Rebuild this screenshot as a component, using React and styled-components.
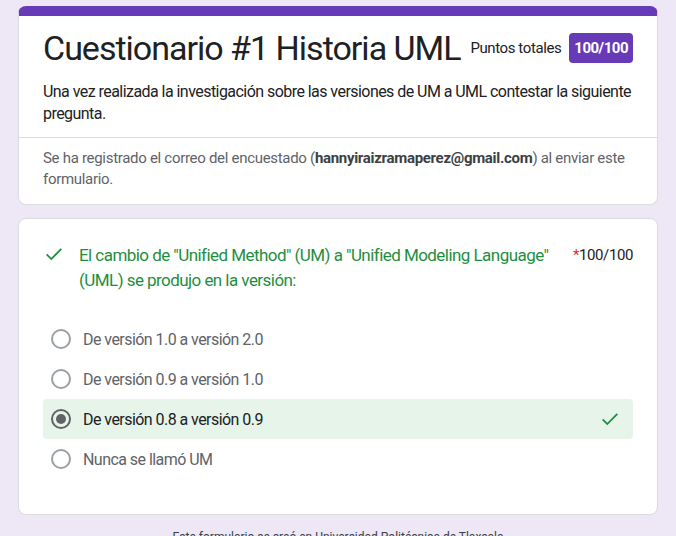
import React from 'react'
import styled, { createGlobalStyle } from 'styled-components'

const GlobalStyle = createGlobalStyle`
  body {
    margin: 0;
    background: #ede7f6;
    font-family: Roboto, "Liberation Sans", Arial, sans-serif;
  }
`

const Page = styled.div`
  width: 640px;
  padding: 6px 18px 0;
  display: flex;
  flex-direction: column;
  gap: 13px;
`

const Card = styled.section`
  background: #fff;
  border: 1px solid #dadce0;
  border-radius: 8px;
  overflow: hidden;
`

const HeaderCard = styled(Card)`
  border-top: 10px solid #673ab7;
  border-color: #673ab7 #dadce0 #dadce0;
`

const HeaderTop = styled.div`
  padding: 12px 24px 12px;
`

const TitleRow = styled.div`
  display: flex;
  align-items: center;
  gap: 8px;
  height: 40px;
`

const Title = styled.h1`
  margin: 0;
  font-size: 34px;
  font-weight: 400;
  color: #202124;
  letter-spacing: -1px;
  flex: 1;
  white-space: nowrap;
`

const PointsLabel = styled.span`
  font-size: 15px;
  color: #202124;
  letter-spacing: -0.4px;
`

const Badge = styled.span`
  background: #673ab7;
  color: #fff;
  font-size: 15px;
  font-weight: 700;
  border-radius: 4px;
  padding: 6px 5px;
  letter-spacing: -0.5px;
`

const Description = styled.p`
  margin: 13px 0 0;
  font-size: 16px;
  line-height: 22px;
  color: #202124;
  letter-spacing: -0.55px;
`

const Notice = styled.div`
  border-top: 1px solid #dadce0;
  padding: 10px 24px 14px;
  font-size: 15px;
  line-height: 21px;
  color: #5f6368;
  letter-spacing: -0.3px;

  b {
    color: #3c4043;
  }
`

const QuestionCard = styled(Card)`
  padding: 24px 24px 35px;
`

const QuestionRow = styled.div`
  display: flex;
  align-items: flex-start;
`

const QuestionIcon = styled.span`
  display: flex;
  margin-right: 14px;
`

const QuestionText = styled.div`
  flex: 1;
  font-size: 17px;
  line-height: 25px;
  color: #1e8e3e;
  letter-spacing: -0.55px;
  padding-right: 8px;
`

const Score = styled.div`
  font-size: 15px;
  line-height: 25px;
  color: #202124;
  letter-spacing: -0.4px;

  span {
    color: #d93025;
  }
`

const Options = styled.div`
  margin-top: 26px;
  display: flex;
  flex-direction: column;
`

const Option = styled.label`
  display: flex;
  align-items: center;
  height: 40px;
  padding: 0 12px 0 8px;
  border-radius: 4px;
  background: ${p => (p.$correct ? '#e6f4ea' : 'transparent')};
  font-size: 16px;
  color: ${p => (p.$correct ? '#202124' : '#5f6368')};
  letter-spacing: -0.55px;
`

const Radio = styled.span`
  width: 16px;
  height: 16px;
  border: 2px solid ${p => (p.$checked ? '#5f6368' : '#9aa0a6')};
  border-radius: 50%;
  margin-right: 12px;
  display: flex;
  align-items: center;
  justify-content: center;
  flex-shrink: 0;

  &::after {
    content: '';
    display: ${p => (p.$checked ? 'block' : 'none')};
    width: 10px;
    height: 10px;
    border-radius: 50%;
    background: #5f6368;
  }
`

const OptionText = styled.span`
  flex: 1;
`

const Footer = styled.div`
  text-align: center;
  font-size: 12px;
  color: #3c4043;
  padding-top: 2px;
`

const Check = ({ size = 20 }) => (
  <svg width={size} height={size} viewBox="0 0 24 24" style={{ flexShrink: 0 }}>
    <path d="M4 12.5l5 5L20 6.5" fill="none" stroke="#1e8e3e" strokeWidth="2" />
  </svg>
)

const options = [
  'De versión 1.0 a versión 2.0',
  'De versión 0.9 a versión 1.0',
  'De versión 0.8 a versión 0.9',
  'Nunca se llamó UM',
]

export default function App() {
  return (
    <>
      <GlobalStyle />
      <Page>
        <HeaderCard>
          <HeaderTop>
            <TitleRow>
              <Title>Cuestionario #1 Historia UML</Title>
              <PointsLabel>Puntos totales</PointsLabel>
              <Badge>100/100</Badge>
            </TitleRow>
            <Description>
              Una vez realizada la investigación sobre las versiones de UM a UML contestar la siguiente pregunta.
            </Description>
          </HeaderTop>
          <Notice>
            Se ha registrado el correo del encuestado (<b>hannyiraizramaperez@gmail.com</b>) al enviar este formulario.
          </Notice>
        </HeaderCard>

        <QuestionCard>
          <QuestionRow>
            <QuestionIcon>
              <Check size={22} />
            </QuestionIcon>
            <QuestionText>
              El cambio de "Unified Method" (UM) a "Unified Modeling Language" (UML) se produjo en la versión:
            </QuestionText>
            <Score><span>*</span>100/100</Score>
          </QuestionRow>
          <Options>
            {options.map((text, i) => (
              <Option key={text} $correct={i === 2}>
                <Radio $checked={i === 2} />
                <OptionText>{text}</OptionText>
                {i === 2 && <Check size={22} />}
              </Option>
            ))}
          </Options>
        </QuestionCard>

        <Footer>Este formulario se creó en Universidad Politécnica de Tlaxcala</Footer>
      </Page>
    </>
  )
}
